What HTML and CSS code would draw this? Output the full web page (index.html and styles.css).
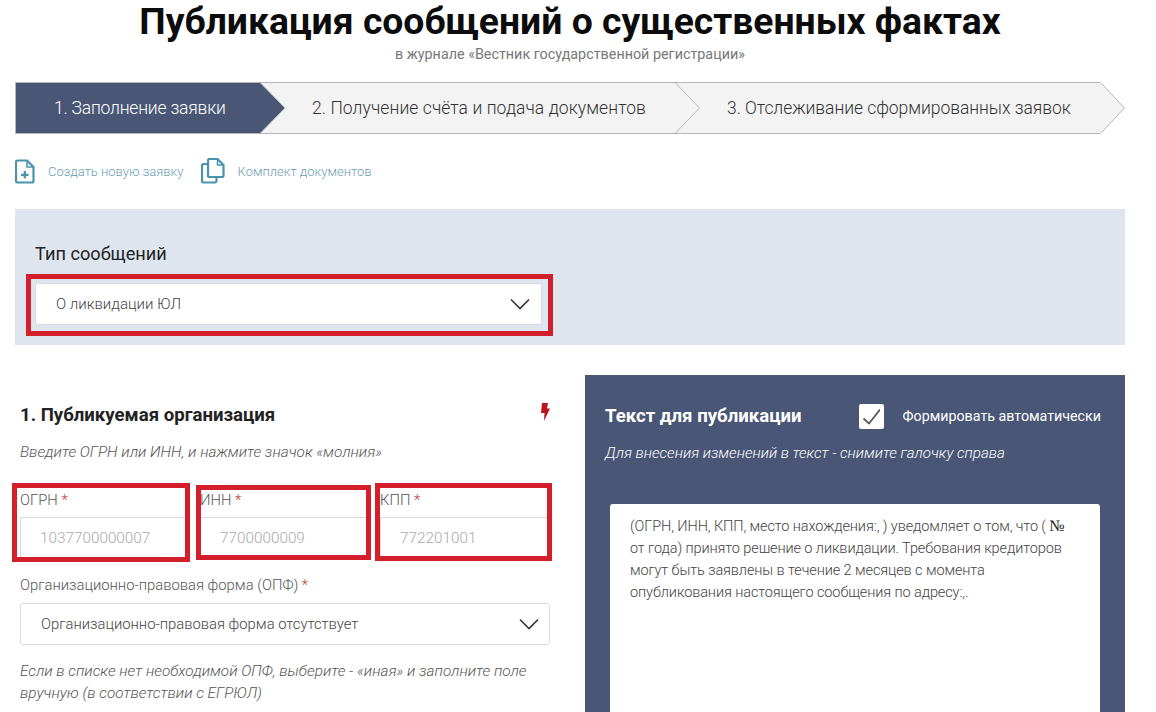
FILE: index.html
```html
<!DOCTYPE html>
<html lang="ru">
<head>
    <meta charset="UTF-8">
    <title>Публикация сообщений о существенных фактах</title>
    <link rel="stylesheet" href="styles.css">
</head>
<body>
    <div class="page">
        <div class="heading">
            <h1>Публикация сообщений о существенных фактах</h1>
            <p>в журнале «Вестник государственной регистрации»</p>
        </div>

        <div class="steps">
            <svg class="steps-bg" width="1110" height="52" viewBox="0 0 1110 52">
                <path d="M245.5 .5H1085.5L1109.5 26L1085.5 51.5H245.5Z" fill="#f3f3f3" stroke="#b5b5b5"/>
                <path d="M660 .5L684.5 26L660 51.5" fill="none" stroke="#b5b5b5"/>
                <path d="M.5 .5H245L270 26L245 51.5H.5Z" fill="#4a5676" stroke="#b5b5b5"/>
            </svg>
            <div class="step step-active">1. Заполнение заявки</div>
            <div class="step step-two">2. Получение счёта и подача документов</div>
            <div class="step step-three">3. Отслеживание сформированных заявок</div>
        </div>

        <div class="links">
            <a class="link">
                <svg width="20" height="25" viewBox="0 0 20 25" fill="none" stroke="#4a93ad" stroke-width="2.200">
                    <path d="M2.500 1.500H12L18.500 8V22A1.500 1.500 0 0 1 17 23.500H2.500A1.500 1.500 0 0 1 1 22V3A1.500 1.500 0 0 1 2.500 1.500Z"/>
                    <path d="M12 1.500V8H18.500" stroke-width="1.500"/>
                    <path d="M9.800 12V19.500M6 15.800H13.500"/>
                </svg>
                Создать новую заявку
            </a>
            <a class="link">
                <svg width="24" height="26" viewBox="0 0 24 26" fill="none" stroke="#4a93ad" stroke-width="2.200">
                    <path d="M7 6H2.500A1.500 1.500 0 0 0 1 7.500V23A1.500 1.500 0 0 0 2.500 24.500H14A1.500 1.500 0 0 0 15.500 23V19"/>
                    <path d="M8.500 1H16.500L22.500 7V17.500A1.500 1.500 0 0 1 21 19H8.500A1.500 1.500 0 0 1 7 17.500V2.500A1.500 1.500 0 0 1 8.500 1Z"/>
                    <path d="M16.500 1V7H22.500" stroke-width="1.500"/>
                </svg>
                Комплект документов
            </a>
        </div>

        <div class="type-panel">
            <div class="type-label">Тип сообщений</div>
            <div class="select type-select">
                О ликвидации ЮЛ
                <svg class="chevron" width="20" height="12" viewBox="0 0 20 12"><path d="M1 1.500L10 10.500L19 1.500" fill="none" stroke="#333" stroke-width="1.600"/></svg>
                <span class="mark mark-type"></span>
            </div>
        </div>

        <div class="columns">
            <div class="org">
                <div class="org-head">
                    <h2>1. Публикуемая организация</h2>
                    <svg width="12" height="18" viewBox="0 0 12 18"><path d="M3 0H9L8 5.500H11L5 18L5.500 10H2Z" fill="#b9161f"/></svg>
                </div>
                <p class="hint org-hint">Введите ОГРН или ИНН, и нажмите значок «молния»</p>

                <div class="fields">
                    <div class="field">
                        <label>ОГРН <span class="req">*</span></label>
                        <div class="input">1037700000007</div>
                        <span class="mark mark-ogrn"></span>
                    </div>
                    <div class="field">
                        <label>ИНН <span class="req">*</span></label>
                        <div class="input">7700000009</div>
                        <span class="mark mark-inn"></span>
                    </div>
                    <div class="field">
                        <label>КПП <span class="req">*</span></label>
                        <div class="input">772201001</div>
                        <span class="mark mark-kpp"></span>
                    </div>
                </div>

                <label class="opf-label">Организационно-правовая форма (ОПФ) <span class="req">*</span></label>
                <div class="select opf-select">
                    Организационно-правовая форма отсутствует
                    <svg class="chevron" width="20" height="12" viewBox="0 0 20 12"><path d="M1 1.500L10 10.500L19 1.500" fill="none" stroke="#333" stroke-width="1.600"/></svg>
                </div>
                <p class="hint opf-hint">Если в списке нет необходимой ОПФ, выберите - «иная» и заполните поле вручную (в соответствии с ЕГРЮЛ)</p>
            </div>

            <div class="publish">
                <div class="publish-head">
                    <h2>Текст для публикации</h2>
                    <div class="auto">
                        <span class="checkbox">
                            <svg width="18" height="18" viewBox="0 0 18 18"><path d="M1.500 11.500L7 16.500L18 2.500" fill="none" stroke="#555" stroke-width="1.700"/></svg>
                        </span>
                        Формировать автоматически
                    </div>
                </div>
                <p class="publish-hint">Для внесения изменений в текст - снимите галочку справа</p>
                <div class="publish-text">(ОГРН, ИНН, КПП, место нахождения:, ) уведомляет о том, что ( <b class="num">№</b> от года) принято решение о ликвидации. Требования кредиторов могут быть заявлены в течение 2 месяцев с момента опубликования настоящего сообщения по адресу:,.</div>
            </div>
        </div>
    </div>
</body>
</html>
```

FILE: styles.css
```css
html, body {
    margin: 0;
    height: 712px;
    overflow: hidden;
}
body {
    font-family: 'Roboto', 'Liberation Sans', sans-serif;
    font-weight: 300;
    background: #fff;
    color: #333;
}
.page {
    width: 1110px;
    height: 712px;
    overflow: hidden;
    padding: 0 31px 0 15px;
}
.heading {
    text-align: center;
}
h1 {
    margin: 0;
    padding-top: 1px;
    font-size: 37.3px;
    line-height: 41px;
    font-weight: 700;
    color: #0c0c0c;
}
.heading p {
    margin: 5px 0 0;
    font-size: 14.35px;
    line-height: 16px;
    font-weight: 400;
    color: #777;
}
.steps {
    position: relative;
    display: flex;
    height: 52px;
    margin-top: 19px;
    font-size: 17.5px;
    line-height: 52px;
}
.steps-bg {
    position: absolute;
    left: 0;
    top: 0;
}
.step {
    position: relative;
}
.step-active {
    width: 297px;
    padding-left: 39px;
    box-sizing: border-box;
    letter-spacing: -0.2px;
    color: #fff;
}
.step-two {
    width: 415px;
    letter-spacing: 0.08px;
}
.step-three {
    letter-spacing: -0.05px;
}
.links {
    display: flex;
    align-items: center;
    height: 26px;
    margin-top: 24px;
    font-size: 13px;
    color: #6b9db3;
}
.link {
    display: flex;
    align-items: center;
    gap: 13px;
    margin-right: 17px;
}
.type-panel {
    height: 136px;
    margin-top: 25px;
    padding: 34px 20px 0;
    box-sizing: border-box;
    background: #dfe5ef;
}
.type-label {
    font-size: 18.2px;
    line-height: 22px;
    font-weight: 400;
    color: #222;
}
.select {
    position: relative;
    display: flex;
    align-items: center;
    justify-content: space-between;
    background: #fff;
    border: 1px solid #d8dbe0;
    border-radius: 2px;
    box-sizing: border-box;
    height: 42px;
    font-size: 15px;
    color: #444;
}
.type-select {
    width: 507px;
    margin-top: 18px;
    padding: 0 11px 0 20px;
}
.mark {
    position: absolute;
    border: 5px solid #d21f2b;
}
.mark-type {
    left: -10px;
    right: -12px;
    top: -10px;
    bottom: -12px;
}
.columns {
    display: flex;
    margin-top: 30px;
}
.org {
    width: 530px;
    margin-left: 5px;
}
.org-head {
    display: flex;
    justify-content: space-between;
    align-items: flex-start;
    padding-top: 25px;
}
.org-head svg {
    margin: 3px -1px 0 0;
}
h2 {
    margin: 0;
    font-size: 18.6px;
    line-height: 30px;
    font-weight: 700;
    color: #222;
}
.hint {
    margin: 0;
    font-size: 15.3px;
    font-style: italic;
    color: #555;
}
.org-hint {
    margin-top: 12px;
    line-height: 20px;
}
.fields {
    display: grid;
    grid-template-columns: repeat(3, 170px);
    gap: 10px;
    margin-top: 28px;
}
.field {
    position: relative;
}
label {
    display: block;
    font-size: 14.8px;
    line-height: 20px;
    color: #555;
}
.req {
    color: #c0392b;
}
.input {
    height: 43px;
    margin-top: 7px;
    padding-left: 19px;
    border: 1px solid #d8dbe0;
    box-sizing: border-box;
    font-size: 15.3px;
    line-height: 41px;
    color: #aaa;
}
.mark-ogrn {
    left: -8px;
    right: 0;
    top: -7px;
    bottom: -2px;
}
.mark-inn {
    left: -4px;
    right: -1px;
    top: -5px;
    bottom: 0;
}
.mark-kpp {
    left: -5px;
    right: -2px;
    top: -7px;
    bottom: -1px;
}
.opf-label {
    margin-top: 15px;
}
.opf-select {
    width: 530px;
    margin-top: 8px;
    padding: 0 10px 0 20px;
    border-radius: 3px;
    font-size: 14.8px;
}
.opf-hint {
    margin-top: 15px;
    line-height: 22px;
}
.publish {
    width: 540px;
    height: 400px;
    margin-left: 35px;
    padding: 0 24px 0 20px;
    box-sizing: border-box;
    background: #4a5676;
    color: #fff;
}
.publish-head {
    display: flex;
    align-items: center;
    justify-content: space-between;
    padding-top: 26px;
}
.publish h2 {
    color: #fff;
}
.auto {
    display: flex;
    align-items: center;
    gap: 19px;
    font-size: 14.25px;
    font-weight: 400;
}
.checkbox {
    display: flex;
    align-items: center;
    justify-content: center;
    width: 25px;
    height: 25px;
    background: #fff;
    border-radius: 2px;
}
.publish-hint {
    margin: 12px 0 0;
    font-size: 15.1px;
    line-height: 20px;
    font-style: italic;
}
.publish-text {
    width: 490px;
    height: 250px;
    margin: 41px 0 0 5px;
    padding: 11px 20px;
    box-sizing: border-box;
    background: #fff;
    border-radius: 3px;
    font-size: 14.5px;
    letter-spacing: -0.1px;
    line-height: 22px;
    color: #444;
}
.num {
    font-family: 'Liberation Serif', serif;
    font-size: 16px;
    color: #222;
}
```
